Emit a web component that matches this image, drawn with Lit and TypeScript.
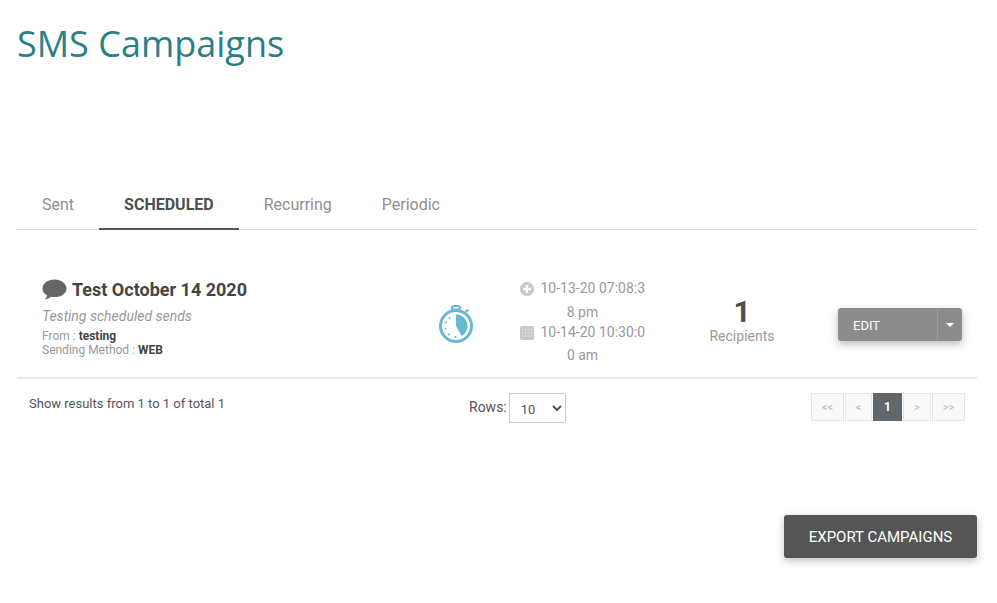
import { LitElement, html, css } from "lit";
import { customElement } from "lit/decorators.js";

@customElement("app-root")
export class AppRoot extends LitElement {
  static styles = css`
    :host { display: block; width: 997px; height: 603px; overflow: hidden; background: #fff; font-family: Roboto, sans-serif; color: #555; box-sizing: border-box; padding: 0 20px 0 17px; }
    * { box-sizing: border-box; }
    h1 { margin: 0; height: 180px; padding-top: 20px; font: 400 36px/48px "Open Sans", sans-serif; color: #2a7f85; }
    .tabs { display: flex; height: 50px; border-bottom: 1px solid #ddd; }
    .tab { padding: 0 25px; height: 50px; line-height: 50px; font-size: 16px; color: #8f8f8f; }
    .tab.active { font-weight: 700; color: #4f4f4f; border-bottom: 2px solid #555; }
    .row { height: 149px; border-bottom: 2px solid #e9e9e9; display: grid; grid-template-columns: 378px 100px 125px 193px 124px; align-items: start; padding-left: 25px; }
    .info { padding-top: 48px; }
    .name { display: flex; align-items: center; gap: 5px; font-size: 18px; line-height: 24px; font-weight: 700; color: #444; }
    .name svg { display: block; }
    .desc { font-size: 14px; font-style: italic; color: #999; line-height: 20px; margin-top: 4px; }
    .meta { font-size: 12px; line-height: 14px; color: #999; margin-top: 3px; }
    .meta b { color: #444; font-weight: 700; }
    .clock { padding: 75px 0 0 19px; }
    .clock svg { display: block; }
    .dates { padding-top: 46px; font-size: 14px; line-height: 24px; color: #999; text-align: center; word-break: break-all; }
    .dates svg { vertical-align: -3px; margin-right: 3px; }
    .dates div { height: 45px; }
    .dates div + div { line-height: 23px; }
    .recip { padding-top: 66px; padding-left: 1px; text-align: center; font-size: 14px; color: #999; line-height: 18px; }
    .recip strong { display: block; font-size: 30px; line-height: 31px; color: #4f4f4f; font-weight: 700; }
    .edit { margin-top: 78px; height: 33px; width: 124px; display: flex; background: #8c8c8c; border-radius: 3px; box-shadow: 0 3px 8px rgba(0,0,0,.28); color: #fff; font-size: 13px; font-weight: 400; }
    .edit span { flex: 1; line-height: 35px; padding-left: 15px; }
    .edit i { width: 25px; border-left: 1px solid #9c9c9c; display: flex; align-items: center; justify-content: center; }
    .edit i::after { content: ""; border: 4px solid transparent; border-top-color: #fff; border-bottom-width: 0; }
    .foot { display: grid; grid-template-columns: 440px 1fr auto; padding: 14px 12px 0 12px; align-items: start; font-size: 13px; }
    .count { line-height: 21px; color: #555; }
    .rows { display: flex; align-items: flex-start; gap: 2px; font-size: 14px; line-height: 28px; color: #555; }
    select { width: 57px; height: 30px; border: 1px solid #ccc; background: #fff; font: 13px Roboto, sans-serif; color: #555; padding: 2px 0 0 7px; border-radius: 0; }
    .pager { display: flex; gap: 1px; }
    .pager span { height: 28px; display: flex; align-items: center; justify-content: center; border: 1px solid #e6e6e6; background: #f9f9f9; color: #bbb; font-size: 11px; }
    .pager span.on { background: #62676b; border-color: #62676b; color: #fff; font-weight: 700; font-size: 12px; }
    .export { display: flex; justify-content: flex-end; margin-top: 92px; }
    .export div { width: 193px; height: 43px; line-height: 44px; background: #555; color: #fff; text-align: center; border-radius: 3px; font-size: 15px; box-shadow: 0 3px 8px rgba(0,0,0,.25); }
  `;

  render() {
    return html`
      <h1>SMS Campaigns</h1>
      <div class="tabs">
        <div class="tab">Sent</div>
        <div class="tab active">SCHEDULED</div>
        <div class="tab">Recurring</div>
        <div class="tab">Periodic</div>
      </div>
      <div class="row">
        <div class="info">
          <div class="name">
            <svg width="25" height="22" viewBox="0 0 25 22"><path fill="#666" d="M12.5.5C5.8.5.5 4.4.5 9.5c0 2.9 1.7 5.3 4.4 6.8-.1 1.5-.8 2.9-2.1 4 2.4-.1 4.6-1 6.2-2.5 1.1.2 2.3.3 3.5.3 6.7 0 12-3.7 12-8.6S19.2.5 12.5.5z"/></svg>
            Test October 14 2020
          </div>
          <div class="desc">Testing scheduled sends</div>
          <div class="meta">From : <b>testing</b><br />Sending Method : <b>WEB</b></div>
        </div>
        <div class="clock">
          <svg width="34" height="38" viewBox="0 0 34 38">
            <g fill="none" stroke="#68b8d0" stroke-width="3">
              <circle cx="17" cy="21" r="15.5" />
              <rect x="13" y="1" width="8" height="3.5" rx="1.7" stroke-width="2" />
              <path d="M17 4.5v2" stroke-width="2.5" />
              <path d="M27 7l2-2.5" stroke-width="2.5" />
            </g>
            <path fill="#68b8d0" d="M17 9.5A11.5 11.5 0 0 1 22.75 31L17 21z" />
            <g fill="#68b8d0">
              <circle cx="10.5" cy="13" r="1" /><circle cx="7" cy="17.5" r="1" /><circle cx="6.5" cy="23.5" r="1" /><circle cx="10" cy="29.5" r="1" /><circle cx="16.5" cy="32" r="1" />
            </g>
          </svg>
        </div>
        <div class="dates">
          <div><svg width="14" height="14" viewBox="0 0 14 14"><circle cx="7" cy="7" r="7" fill="#c8c8c8" /><path d="M7 3v8M3 7h8" stroke="#fff" stroke-width="2.4" /></svg> 10-13-20 07:08:38 pm</div>
          <div><svg width="14" height="14" viewBox="0 0 14 14"><rect width="14" height="14" rx="2" fill="#c8c8c8" /><path d="M2 4h10M2 7h10M2 10h10" stroke="#eee" stroke-width="1.2" stroke-dasharray="1.4 1.4" /></svg> 10-14-20 10:30:00 am</div>
        </div>
        <div class="recip"><strong>1</strong>Recipients</div>
        <div class="edit"><span>EDIT</span><i></i></div>
      </div>
      <div class="foot">
        <div class="count">Show results from 1 to 1 of total 1</div>
        <div class="rows">Rows: <select><option>10</option></select></div>
        <div class="pager">
          <span style="width:33px">&lt;&lt;</span>
          <span style="width:27px">&lt;</span>
          <span class="on" style="width:29px">1</span>
          <span style="width:28px">&gt;</span>
          <span style="width:33px">&gt;&gt;</span>
        </div>
      </div>
      <div class="export"><div>EXPORT CAMPAIGNS</div></div>
    `;
  }
}
